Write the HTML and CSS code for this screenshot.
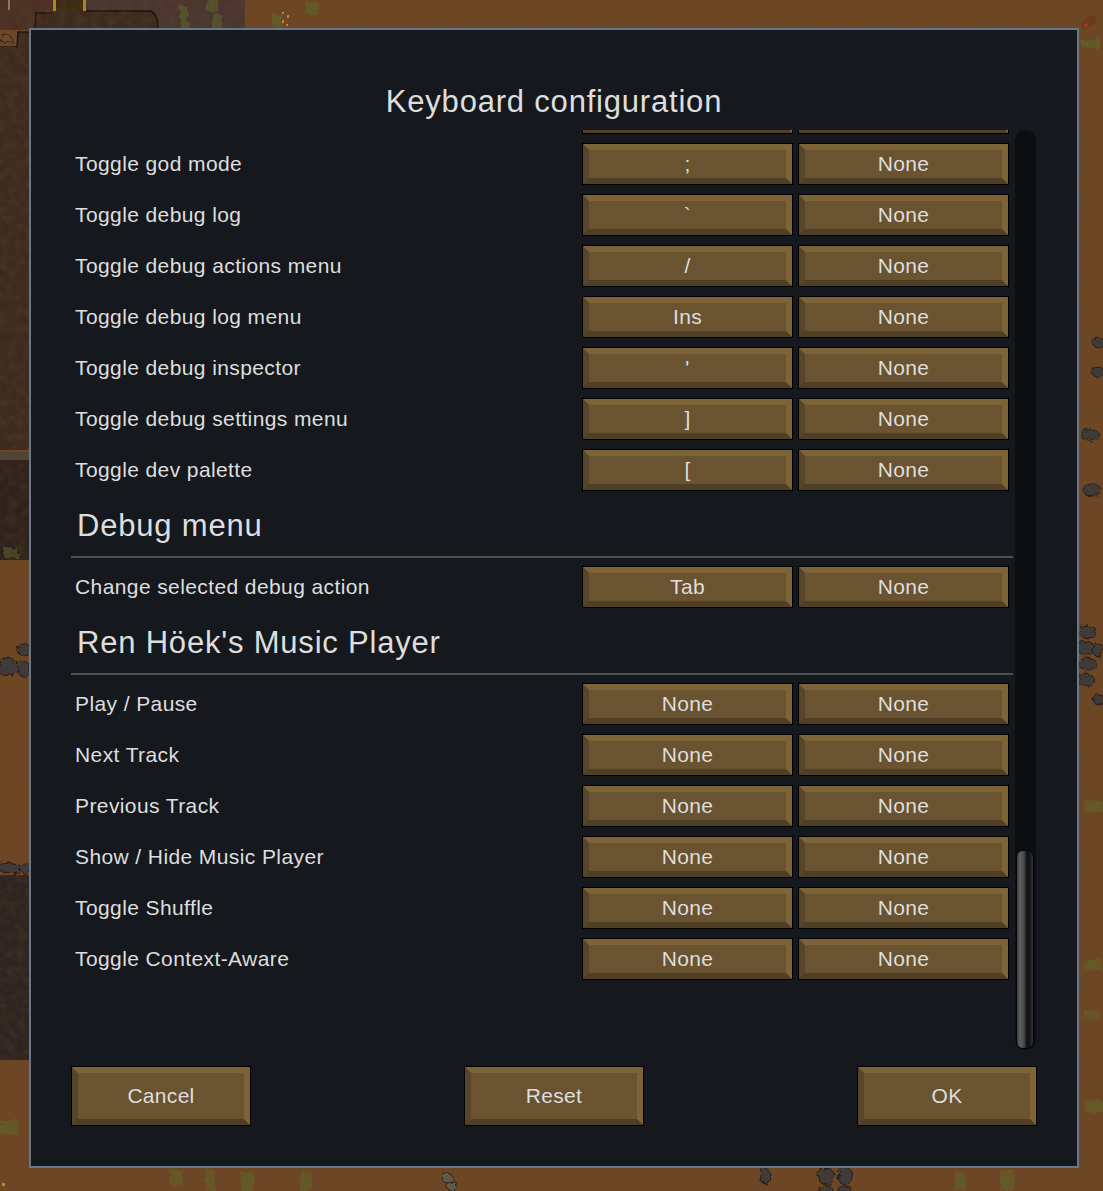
FILE: index.html
```html
<!DOCTYPE html>
<html lang="en">
  <head>
    <meta charset="UTF-8" />
    <title>Keyboard configuration</title>
    <link rel="stylesheet" href="styles.css">
  </head>
  <body>
    <!-- map behind the dialog -->
    <svg class="map" width="1103" height="1191" viewBox="0 0 1103 1191">
      <defs>
        <filter id="grain" x="0" y="0" width="100%" height="100%">
          <feTurbulence type="fractalNoise" baseFrequency="0.12" numOctaves="3" seed="4"/>
          <feColorMatrix values="0 0 0 0 0.12  0 0 0 0 0.07  0 0 0 0 0.03  0 0 0 1.6 -0.55"/>
        </filter>
        <filter id="rough" x="-20%" y="-20%" width="140%" height="140%">
          <feTurbulence type="fractalNoise" baseFrequency="0.18" numOctaves="2" seed="7"/>
          <feDisplacementMap in="SourceGraphic" scale="7"/>
        </filter>
      </defs>

      <!-- floors and dark ground -->
      <rect x="0" y="0" width="85" height="30" fill="#4c3024"/>
      <rect x="85" y="0" width="160" height="28" fill="#4a362e"/>
      <path d="M0 47 H17 L18 32 H35 L36 13 H52 L53 0 H86 V11 H150 Q158 13 158 28 H36 V47 H29 V450 H0 Z" fill="#3e2b1f"/>
      <path d="M0 47 H17 L18 32 H35 L36 13 H52 M86 11 H150 Q158 13 158 28" fill="none" stroke="#1c120c" stroke-width="1.5"/>
      <rect x="54" y="0" width="30" height="12" fill="#3d2c12"/>
      <rect x="0" y="47" width="29" height="403" fill="#3e2b1f"/>
      <rect x="0" y="452" width="29" height="8" fill="#4e4436"/>
      <rect x="0" y="460" width="29" height="100" fill="#2f221d"/>
      <rect x="0" y="875" width="29" height="185" fill="#2e2420"/>
      <rect x="0" y="0" width="1103" height="1191" filter="url(#grain)" opacity="0.35"/>

      <!-- rocks -->
      <g fill="#3f3b39" stroke="#1d1a18" filter="url(#rough)">
        <ellipse cx="8" cy="667" rx="12" ry="8"/>
        <ellipse cx="24" cy="650" rx="7" ry="6"/>
        <ellipse cx="24" cy="669" rx="6" ry="8"/>
        <ellipse cx="10" cy="868" rx="12" ry="5"/>
        <ellipse cx="26" cy="868" rx="6" ry="5"/>
        <ellipse cx="6" cy="39" rx="6" ry="4" fill="#6a4a36"/>
        <ellipse cx="1090" cy="435" rx="9" ry="6"/>
        <ellipse cx="1092" cy="490" rx="9" ry="6"/>
        <ellipse cx="1088" cy="632" rx="9" ry="6"/>
        <ellipse cx="1086" cy="648" rx="9" ry="6"/>
        <ellipse cx="1088" cy="664" rx="9" ry="6"/>
        <ellipse cx="1086" cy="680" rx="9" ry="6"/>
        <ellipse cx="1098" cy="650" rx="6" ry="6"/>
        <ellipse cx="1099" cy="700" rx="6" ry="5"/>
        <ellipse cx="1098" cy="342" rx="6" ry="5"/>
        <ellipse cx="1098" cy="372" rx="6" ry="5"/>
        <ellipse cx="765" cy="1176" rx="5" ry="8"/>
        <ellipse cx="826" cy="1176" rx="8" ry="9"/>
        <ellipse cx="845" cy="1176" rx="7" ry="9"/>
        <ellipse cx="826" cy="1190" rx="7" ry="4"/>
        <ellipse cx="845" cy="1190" rx="7" ry="4"/>
        <ellipse cx="447" cy="1178" rx="6" ry="4" fill="#5e5a48"/>
        <ellipse cx="452" cy="1186" rx="6" ry="4" fill="#5e5a48"/>
      </g>

      <!-- moss -->
      <g fill="#5d6a2a" opacity="0.5" filter="url(#rough)">
        <rect x="206" y="0" width="12" height="12"/>
        <rect x="180" y="5" width="8" height="23"/>
        <rect x="306" y="2" width="12" height="12"/>
        <rect x="212" y="14" width="10" height="14"/>
        <rect x="272" y="14" width="10" height="14"/>
        <rect x="4" y="548" width="14" height="10"/>
        <rect x="0" y="1120" width="18" height="14"/>
        <rect x="1082" y="40" width="18" height="8"/>
        <rect x="1084" y="800" width="19" height="12"/>
        <rect x="1084" y="960" width="18" height="10"/>
        <rect x="1084" y="1010" width="16" height="9"/>
        <rect x="1085" y="1100" width="18" height="12"/>
        <rect x="170" y="1170" width="12" height="16"/>
        <rect x="205" y="1170" width="10" height="21"/>
        <rect x="240" y="1172" width="14" height="19"/>
        <rect x="300" y="1172" width="12" height="19"/>
        <rect x="1000" y="1170" width="14" height="20"/>
        <rect x="955" y="1172" width="10" height="18"/>
      </g>

      <!-- small things lying around -->
      <g fill="#c08a2a">
        <rect x="282" y="12" width="2" height="2"/>
        <rect x="287" y="15" width="2" height="3"/>
        <rect x="282" y="20" width="2" height="3"/>
        <rect x="286" y="24" width="2" height="2"/>
        <rect x="2" y="1183" width="3" height="3"/>
        <rect x="53" y="0" width="3" height="11" fill="#a8871f"/>
        <rect x="83" y="0" width="3" height="11" fill="#a8871f"/>
        <rect x="8" y="0" width="2" height="10" fill="#8a7a50"/>
      </g>
      <rect x="1081" y="18" width="16" height="8" rx="3" fill="#6b3c15" transform="rotate(-35 1089 22)"/>
      <circle cx="1086" cy="25" r="2" fill="#a8342c"/>
    </svg>

    <div class="dialog">
      <h1 class="title">Keyboard configuration</h1>

      <div class="scroll">
        <div class="list">
          <div class="row">
            <span class="label"></span>
            <span class="key"></span>
            <span class="key"></span>
          </div>
          <div class="row">
            <span class="label">Toggle god mode</span>
            <button class="key">;</button>
            <button class="key">None</button>
          </div>
          <div class="row">
            <span class="label">Toggle debug log</span>
            <button class="key">`</button>
            <button class="key">None</button>
          </div>
          <div class="row">
            <span class="label">Toggle debug actions menu</span>
            <button class="key">/</button>
            <button class="key">None</button>
          </div>
          <div class="row">
            <span class="label">Toggle debug log menu</span>
            <button class="key">Ins</button>
            <button class="key">None</button>
          </div>
          <div class="row">
            <span class="label">Toggle debug inspector</span>
            <button class="key">'</button>
            <button class="key">None</button>
          </div>
          <div class="row">
            <span class="label">Toggle debug settings menu</span>
            <button class="key">]</button>
            <button class="key">None</button>
          </div>
          <div class="row">
            <span class="label">Toggle dev palette</span>
            <button class="key">[</button>
            <button class="key">None</button>
          </div>

          <h2 class="section">Debug menu</h2>
          <div class="row">
            <span class="label">Change selected debug action</span>
            <button class="key">Tab</button>
            <button class="key">None</button>
          </div>

          <h2 class="section">Ren Höek's Music Player</h2>
          <div class="row">
            <span class="label">Play / Pause</span>
            <button class="key">None</button>
            <button class="key">None</button>
          </div>
          <div class="row">
            <span class="label">Next Track</span>
            <button class="key">None</button>
            <button class="key">None</button>
          </div>
          <div class="row">
            <span class="label">Previous Track</span>
            <button class="key">None</button>
            <button class="key">None</button>
          </div>
          <div class="row">
            <span class="label">Show / Hide Music Player</span>
            <button class="key">None</button>
            <button class="key">None</button>
          </div>
          <div class="row">
            <span class="label">Toggle Shuffle</span>
            <button class="key">None</button>
            <button class="key">None</button>
          </div>
          <div class="row">
            <span class="label">Toggle Context-Aware</span>
            <button class="key">None</button>
            <button class="key">None</button>
          </div>
        </div>
        <div class="scrollbar">
          <div class="thumb"></div>
        </div>
      </div>

      <div class="footer">
        <button class="action">Cancel</button>
        <button class="action">Reset</button>
        <button class="action">OK</button>
      </div>
    </div>
  </body>
</html>
```

FILE: styles.css
```css
html,
body {
  margin: 0;
  height: 1191px;
  overflow: hidden;
}
body {
  position: relative;
  font-family: "Liberation Sans", Arial, sans-serif;
  color: #dedede;
  background-color: #6e4624;
}
.map {
  position: absolute;
  top: 0;
  left: 0;
}

.dialog {
  position: relative;
  box-sizing: border-box;
  display: flex;
  flex-direction: column;
  width: 1050px;
  height: 1140px;
  margin: 28px 0 0 29px;
  padding: 40px;
  background-color: #15191e;
  border: 2px solid #68788c;
}
.title {
  height: 60px;
  margin: 0;
  font-size: 31px;
  font-weight: normal;
  line-height: 64px;
  letter-spacing: 0.8px;
  text-align: center;
}

.scroll {
  display: flex;
  gap: 2px;
  height: 920px;
  overflow: hidden;
}
.list {
  width: 942px;
  flex-shrink: 0;
  margin-top: -38px;
}
.row {
  display: flex;
  align-items: center;
  gap: 5px;
  height: 42px;
  margin-bottom: 9px;
  padding: 0 4px;
}
.label {
  flex: 1;
  font-size: 21px;
  letter-spacing: 0.4px;
}
.section {
  height: 56px;
  margin: 0 0 8px;
  padding-left: 6px;
  border-bottom: 2px solid #4f5052;
  font-size: 31px;
  font-weight: normal;
  line-height: 51px;
  letter-spacing: 0.8px;
}

.key,
.action {
  box-sizing: border-box;
  padding: 0;
  font-family: inherit;
  color: #dedede;
  background-color: #6a5330;
  border-style: solid;
  border-width: 6px;
  border-color: #7d6437 #7d6437 #4f3f25 #56452a;
  outline: 1px solid #000;
  letter-spacing: 0.3px;
}
.key {
  width: 209px;
  height: 40px;
  margin: 0 1px;
  font-size: 21px;
}
.action {
  width: 178px;
  height: 58px;
  margin: 1px;
  font-size: 21px;
}

.scrollbar {
  flex-shrink: 0;
  display: flex;
  align-items: flex-end;
  width: 21px;
  padding-left: 1px;
  box-sizing: border-box;
  background-color: #0c0f12;
  border-radius: 11px;
}
.thumb {
  box-sizing: border-box;
  width: 18px;
  height: 199px;
  margin-bottom: 1px;
  background-image: linear-gradient(90deg, #3f3f3f 0%, #5f5f5f 20%, #444 45%, #151515 60%, #111 75%, #333 100%);
  border: 1px solid #050505;
  border-radius: 7px;
}

.footer {
  display: flex;
  justify-content: space-between;
  margin-top: 16px;
}
```
